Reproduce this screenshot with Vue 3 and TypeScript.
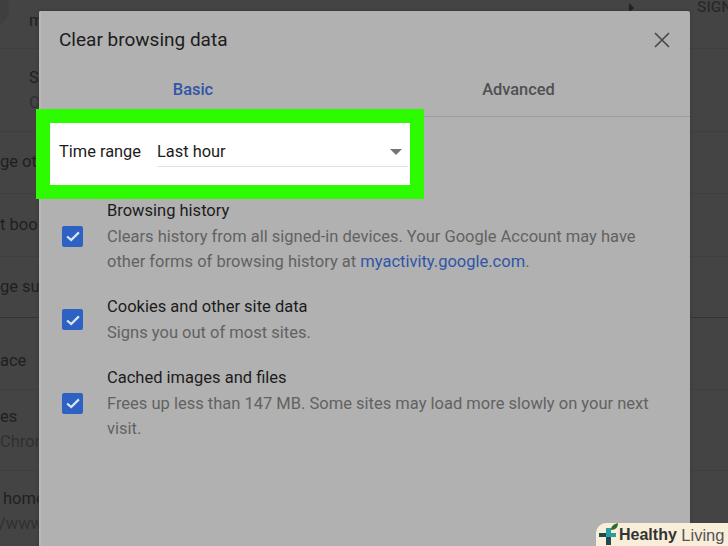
<script setup lang="ts">
interface Row { height: number; lines: string[]; indent: number; subIndent?: number; top?: number; bottom?: number; strong?: boolean; }
const rows: Row[] = [
  { height: 49, lines: ['m'], indent: 29, bottom: 8 },
  { height: 83, lines: ['S', 'O'], indent: 29 },
  { height: 62, lines: ['ge ot'], indent: 0, bottom: 2 },
  { height: 63, lines: ['t boo'], indent: 0, bottom: 2 },
  { height: 61, lines: ['ge su'], indent: 0, bottom: 2, strong: true },
  { height: 72, lines: ['ace'], indent: -9, top: 14 },
  { height: 81, lines: ['es', 'Chron'], indent: 0, bottom: 2 },
  { height: 76, lines: ['home', '/www'], indent: 3, subIndent: -4, top: 4 },
];
interface Item { title: string; desc: string; link?: string; after?: string; }
const items: Item[] = [
  { title: 'Browsing history', desc: 'Clears history from all signed-in devices. Your Google Account may have other forms of browsing history at ', link: 'myactivity.google.com', after: '.' },
  { title: 'Cookies and other site data', desc: 'Signs you out of most sites.' },
  { title: 'Cached images and files', desc: 'Frees up less than 147 MB. Some sites may load more slowly on your next visit.' },
];
</script>

<template>
  <div class="page">
    <div class="backdrop">
      <div
        v-for="(r, i) in rows"
        :key="i"
        class="bg-row"
        :class="{ strong: r.strong }"
        :style="{ height: r.height + 'px', paddingLeft: r.indent + 'px', paddingTop: (r.top ?? 0) + 'px', paddingBottom: (r.bottom ?? 0) + 'px' }"
      >
        <div
          v-for="(l, j) in r.lines"
          :key="j"
          :class="j === 1 ? 'bg-sub' : 'bg-main'"
          :style="j === 1 && r.subIndent ? { marginLeft: r.subIndent + 'px' } : undefined"
        >{{ l }}</div>
      </div>
    </div>
    <span class="avatar"></span>
    <span class="sign">SIGN</span>
    <span class="caret"></span>

    <section class="dialog">
      <header class="head">
        <h1>Clear browsing data</h1>
        <svg class="close" width="16" height="16" viewBox="0 0 16 16"><path d="M1 1 L15 15 M15 1 L1 15" stroke="#4a4a4a" stroke-width="1.7" fill="none" /></svg>
      </header>
      <nav class="tabs">
        <span class="tab active">Basic</span>
        <span class="tab">Advanced</span>
      </nav>
      <div class="list">
        <div v-for="(it, i) in items" :key="i" class="item">
          <span class="box">
            <svg width="20" height="20" viewBox="0 0 22 22"><path d="M4.5 11.5 L9 15.5 L17.5 7" stroke="#dfe5f0" stroke-width="2.4" fill="none" /></svg>
          </span>
          <div class="text">
            <div class="title">{{ it.title }}</div>
            <div class="desc">{{ it.desc }}<a v-if="it.link" class="link">{{ it.link }}</a>{{ it.after }}</div>
          </div>
        </div>
      </div>
    </section>

    <div class="highlight">
      <span class="label">Time range</span>
      <div class="select">
        <span>Last hour</span>
        <i class="arrow"></i>
      </div>
    </div>

    <div class="badge">
      <svg width="22" height="23" viewBox="0 0 22 23">
        <path d="M8 5 H13 V10 H18 V14 H8 Z" fill="#2a9fa2" />
        <path d="M1 10 H8 V14 H1 Z M8 14 H13 V22 H8 Z" fill="#1f4a50" />
        <path d="M13 7 C13 3 16 1 20 0 C20 4 18 7 13 7 Z" fill="#2e6b2e" />
      </svg>
      <span class="b1">Healthy</span><span class="b2">Living</span>
    </div>
  </div>
</template>

<style>
html, body { margin: 0; padding: 0; background: #444; overflow: hidden; }
</style>

<style scoped>
.page {
  position: relative;
  width: 728px;
  height: 546px;
  overflow: hidden;
  background: #444;
  font-family: Roboto, "Liberation Sans", sans-serif;
}
.backdrop { display: flex; flex-direction: column; }
.bg-row {
  box-sizing: border-box;
  border-bottom: 1px solid #3f3f3f;
  display: flex;
  flex-direction: column;
  justify-content: center;
  font-size: 16.5px;
  color: #1f1f1f;
  line-height: 25px;
  white-space: nowrap;
}
.strong { border-bottom-color: #343434; }
.bg-sub { color: #303030; }
.avatar {
  position: absolute;
  left: -18px;
  top: -8px;
  width: 27px;
  height: 33px;
  border-radius: 50%;
  background: #3f3f3f;
}
.sign {
  position: absolute;
  left: 697px;
  top: -2px;
  font-size: 15.5px;
  font-weight: 500;
  color: #2a2a2a;
}
.caret {
  position: absolute;
  left: 629px;
  top: 3px;
  border-left: 5px solid #222;
  border-top: 5px solid transparent;
  border-bottom: 5px solid transparent;
}
.dialog {
  position: absolute;
  left: 39px;
  top: 11px;
  width: 651px;
  height: 560px;
  background: #b1b1b1;
  border-radius: 2px;
  box-shadow: 0 0 3px #333, inset 2px 0 0 #b9b9b9;
  display: flex;
  flex-direction: column;
}
.head {
  display: flex;
  justify-content: space-between;
  align-items: center;
  padding: 0 20px;
  height: 57px;
}
.head h1 {
  margin: 0;
  font-size: 19px;
  font-weight: 400;
  color: #1c1c1c;
}
.tabs {
  display: flex;
  height: 49px;
  box-sizing: border-box;
  border-bottom: 1px solid #9b9b9b;
  font-size: 16.4px;
  font-weight: 500;
  color: #505050;
}
.tab { text-align: center; padding-top: 12px; }
.active { color: #2f55a8; width: 308px; }
.tabs .tab:last-child { width: 343px; }
.list {
  display: flex;
  flex-direction: column;
  gap: 20px;
  padding: 81px 0 0 23px;
}
.item { display: flex; align-items: center; gap: 24px; }
.box {
  width: 21px;
  height: 21px;
  background: #2d62c4;
  border-radius: 2px;
  flex: none;
  display: flex;
  align-items: center;
  justify-content: center;
}
.text { width: 556px; }
.title { font-size: 16.5px; line-height: 25px; margin-bottom: 1px; color: #1c1c1c; }
.desc { font-size: 16.5px; line-height: 25px; color: #626262; }
.link { color: #2f55a8; }
.highlight {
  position: absolute;
  left: 36px;
  top: 109px;
  width: 360px;
  height: 62px;
  border: 14px solid #2dfb00;
  background: #fff;
  display: flex;
  align-items: flex-start;
  font-size: 16.4px;
  color: #1c1c1c;
}
.label {
  padding: 14px 0 0 9px;
  line-height: 29px;
  width: 107px;
  box-sizing: border-box;
}
.select {
  flex: 1;
  height: 44px;
  margin-right: 2px;
  box-sizing: border-box;
  border-bottom: 1px solid #e2e2e2;
  display: flex;
  align-items: center;
  justify-content: space-between;
  padding: 14px 6px 0 0;
  line-height: 29px;
}
.arrow {
  border-top: 6px solid #757575;
  border-left: 6px solid transparent;
  border-right: 6px solid transparent;
}
.badge {
  position: absolute;
  left: 596px;
  top: 523px;
  width: 132px;
  height: 23px;
  box-sizing: border-box;
  background: #f8eeda;
  border-top-left-radius: 10px;
  display: flex;
  align-items: center;
  font-family: "Liberation Sans", sans-serif;
  font-size: 16px;
  line-height: 22px;
  white-space: nowrap;
}
.badge svg { position: absolute; left: 2px; top: 0; }
.b1 { font-weight: 700; color: #333; margin-left: 23px; }
.b2 { color: #555; margin-left: 4.5px; font-size: 16.5px; }
</style>
